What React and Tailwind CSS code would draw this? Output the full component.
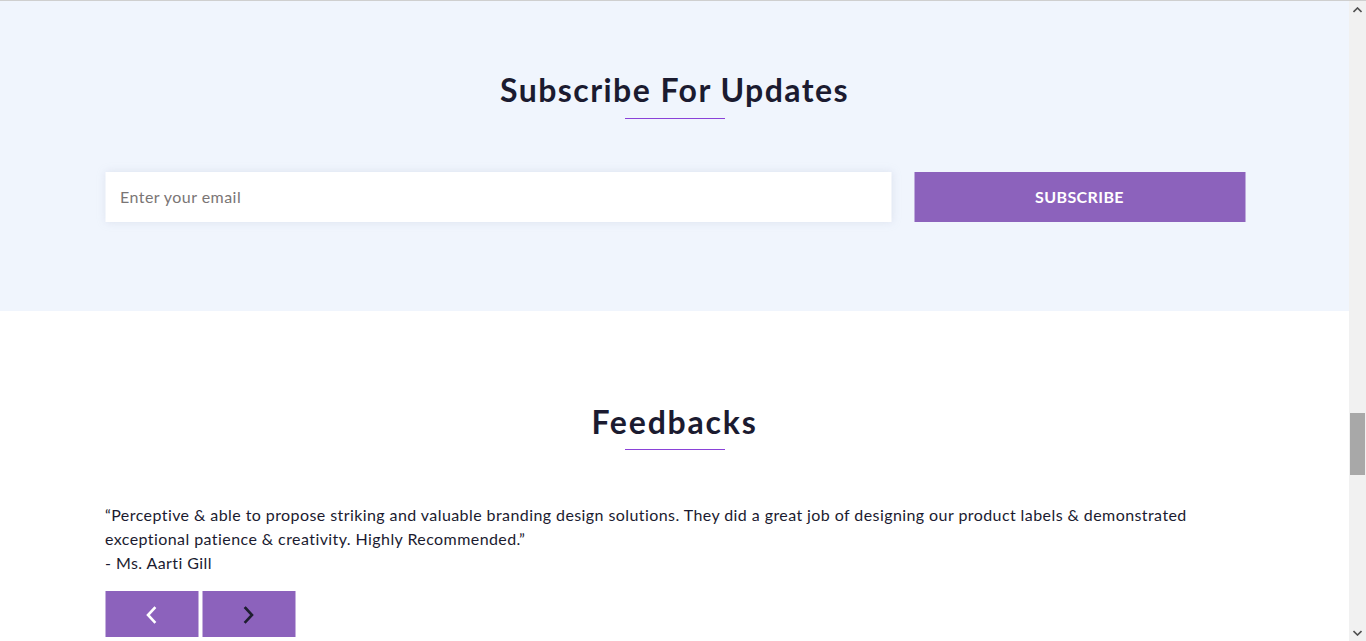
import React from "react";

const font = { fontFamily: "Lato, 'Open Sans', sans-serif" };

function Chevron({ dir, color }) {
  return (
    <svg width="14" height="20" viewBox="0 0 14 20" fill="none" className="translate-y-[1px]">
      {dir === "left" ? (
        <path d="M10 3 L3.5 10 L10 17" stroke={color} strokeWidth="2.6" strokeLinecap="square" />
      ) : (
        <path d="M4 3 L10.5 10 L4 17" stroke={color} strokeWidth="2.6" strokeLinecap="square" />
      )}
    </svg>
  );
}

function Scrollbar() {
  return (
    <div className="w-[17px] shrink-0 bg-[#f1f1f1] flex flex-col items-center">
      <div className="h-[17px] w-full flex items-center justify-center">
        <svg width="9" height="6" viewBox="0 0 9 6"><path d="M0.5 5 L4.5 1 L8.5 5" stroke="#505050" strokeWidth="1.6" fill="none" /></svg>
      </div>
      <div className="flex-1 w-full flex flex-col">
        <div className="h-[395px]" />
        <div className="h-[62px] w-[15px] ml-[1px] bg-[#a8a8a8]" />
        <div className="flex-1" />
      </div>
      <div className="h-[17px] w-full flex items-center justify-center">
        <svg width="9" height="6" viewBox="0 0 9 6"><path d="M0.5 1 L4.5 5 L8.5 1" stroke="#505050" strokeWidth="1.6" fill="none" /></svg>
      </div>
    </div>
  );
}

export default function App() {
  return (
    <div className="h-[641px] w-[1366px] overflow-hidden border-t border-[#cfcfcf] flex" style={font}>
      <div className="flex-1 overflow-hidden flex flex-col">
        <section className="bg-[#f0f5fd] pt-[70px] pb-[89px] flex flex-col items-center">
          <h2 className="text-[32px] leading-[38px] font-bold text-[#1b1b30] tracking-[1.45px]">Subscribe For Updates</h2>
          <div className="mt-[9px] h-px w-[100px] bg-[#8a42d8]" />
          <div className="mt-[53px] w-[1140px] flex gap-[23px] translate-x-[0.5px]">
            <div className="w-[786px] h-[50px] bg-white shadow-[0_0_8px_rgba(180,190,210,0.35)] flex items-center pl-[15px]">
              <span className="text-[16px] text-[#7a7575] tracking-[0.45px]">Enter your email</span>
            </div>
            <button className="w-[331px] h-[50px] bg-[#8c62bc] text-white font-bold text-[16px] tracking-[0.4px]">SUBSCRIBE</button>
          </div>
        </section>
        <section className="bg-white pt-[92px] flex flex-col items-center">
          <h2 className="text-[32px] leading-[38px] font-bold text-[#1b1b30] tracking-[1.8px]">Feedbacks</h2>
          <div className="mt-[8px] h-px w-[100px] bg-[#8a42d8]" />
          <div className="mt-[53px] w-[1140px] translate-x-[0.5px]">
            <p className="text-[16px] leading-[24px] text-[#1b1b30] tracking-[0.42px]">
              “Perceptive &amp; able to propose striking and valuable branding design solutions. They did a great job of designing our product labels &amp; demonstrated exceptional patience &amp; creativity. Highly Recommended.”
              <br />- Ms. Aarti Gill
            </p>
            <div className="mt-[16px] flex gap-[4px]">
              <button className="w-[93px] h-[46px] bg-[#8c62bc] flex items-center justify-center">
                <Chevron dir="left" color="#ffffff" />
              </button>
              <button className="w-[93px] h-[46px] bg-[#8c62bc] flex items-center justify-center">
                <Chevron dir="right" color="#1e1e30" />
              </button>
            </div>
          </div>
        </section>
      </div>
      <Scrollbar />
    </div>
  );
}
